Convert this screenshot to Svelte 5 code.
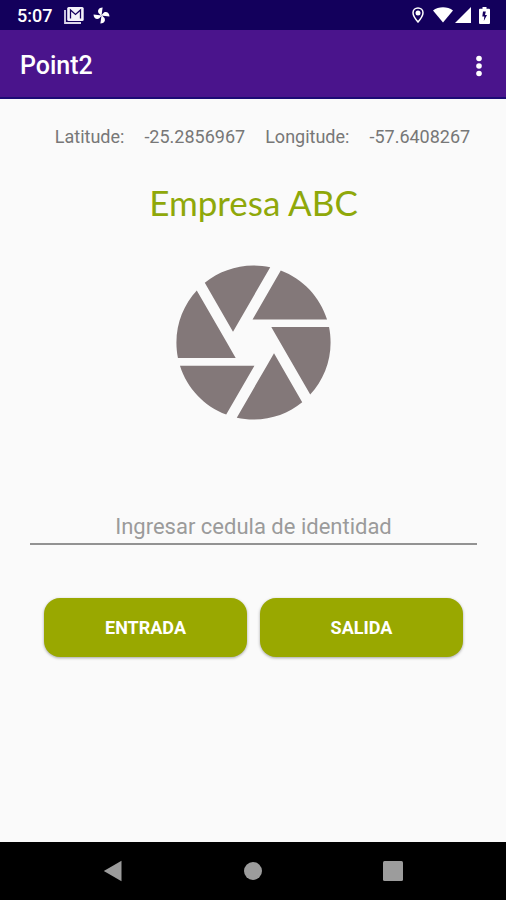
<svelte:head>
  <title>Point2</title>
</svelte:head>

<script>
  const coords = [
    { label: 'Latitude:', value: '-25.2856967' },
    { label: 'Longitude:', value: '-57.6408267' },
  ];

  const actions = ['ENTRADA', 'SALIDA'];

  let cedula = '';
</script>

<div class="screen">
  <div class="status">
    <span class="time">5:07</span>
    <div class="notifications">
      <svg width="20" height="17" viewBox="0 0 20 17" aria-hidden="true">
        <path d="M1 3v13h16" fill="none" stroke="#dcd8ea" stroke-width="1.8" />
        <rect x="3.2" y="0" width="16.5" height="14" rx="1.5" fill="#f4f2fa" />
        <path d="M6.500 11.500V3l5 4.500 5-4.500v8.500" fill="none" stroke="#16005e" stroke-width="1.3" />
      </svg>
      <svg width="17" height="17" viewBox="0 0 17 17" aria-hidden="true">
        <g fill="#fff" transform="rotate(8 8.5 8.5)">
          <path d="M8.500 9V0.500C5 .8 3.500 4 5.200 6.500z" />
          <path d="M8 8.500h8.500C16.200 5 13 3.500 10.500 5.200z" />
          <path d="M8.500 8v8.500c3.500-.3 5-3.500 3.300-6z" />
          <path d="M9 8.500H.5c.3 3.500 3.500 5 6 3.300z" />
        </g>
      </svg>
    </div>
    <div class="system">
      <svg width="12" height="16" viewBox="0 0 12 16" aria-hidden="true">
        <path d="M6 1C3.2 1 1 3.1 1 5.8 1 9.300 6 15 6 15s5-5.700 5-9.200C11 3.100 8.800 1 6 1z" fill="none" stroke="#fff" stroke-width="1.5" />
        <circle cx="6" cy="6" r="2.5" fill="#fff" />
      </svg>
      <svg class="wifi" width="20" height="16" viewBox="0 0 20 16" aria-hidden="true">
        <path d="M0 3.5C5.500-.9 14.500-.9 20 3.500L10 15.500z" fill="#fff" />
      </svg>
      <svg class="signal" width="16" height="16" viewBox="0 0 16 16" aria-hidden="true">
        <path d="M16 0v16H0z" fill="#fff" />
      </svg>
      <svg class="battery" width="11" height="17" viewBox="0 0 11 17" aria-hidden="true">
        <path d="M3.500 0h4v1.700H10a1 1 0 0 1 1 1V16a1 1 0 0 1-1 1H1a1 1 0 0 1-1-1V2.700a1 1 0 0 1 1-1h2.500z" fill="#fff" />
        <path d="M6.800 4.500H4L3.300 9.500h2L4.800 14l3.200-6H6z" fill="#16005e" />
      </svg>
    </div>
  </div>

  <header>
    <h1>Point2</h1>
    <button class="more" aria-label="More options">
      <svg width="6" height="22" viewBox="0 0 6 22" fill="#fff" aria-hidden="true">
        <circle cx="3" cy="3.5" r="2.8" />
        <circle cx="3" cy="11" r="2.8" />
        <circle cx="3" cy="18.5" r="2.8" />
      </svg>
    </button>
  </header>

  <main>
    <div class="coords">
      {#each coords as c}
        <span>{c.label}</span>
        <span>{c.value}</span>
      {/each}
    </div>

    <h2>Empresa ABC</h2>

    <svg class="shutter" viewBox="0 0 24 24" aria-hidden="true">
      <path d="M9.4 10.5l4.77-8.26C13.47 2.09 12.75 2 12 2c-2.4 0-4.6.85-6.32 2.25l3.66 6.35.06-.1zM21.54 9c-.92-2.92-3.15-5.26-6-6.34L11.88 9h9.66zm.26 1h-7.49l.29.5 4.76 8.25C21 16.97 22 14.61 22 12c0-.69-.07-1.35-.2-2zM8.54 12l-3.9-6.75C3.01 7.03 2 9.39 2 12c0 .69.07 1.35.2 2h7.49l-1.15-2zm-6.08 3c.92 2.92 3.15 5.26 6 6.34L12.12 15H2.46zm11.27 0l-3.9 6.76c.7.15 1.42.24 2.17.24 2.4 0 4.6-.85 6.32-2.25l-3.66-6.35-.93 1.6z" />
    </svg>

    <input
      type="text"
      inputmode="numeric"
      aria-label="Cedula de identidad"
      placeholder="Ingresar cedula de identidad"
      bind:value={cedula}
    />

    <div class="actions">
      {#each actions as action}
        <button>{action}</button>
      {/each}
    </div>
  </main>

  <nav>
    <button aria-label="Back">
      <svg width="20" height="22" viewBox="0 0 20 22" aria-hidden="true"><path d="M18.500.8v20.400L.8 11z" /></svg>
    </button>
    <button aria-label="Home">
      <svg width="20" height="20" viewBox="0 0 20 20" aria-hidden="true"><circle cx="10" cy="10" r="9" /></svg>
    </button>
    <button aria-label="Recents">
      <svg width="20" height="20" viewBox="0 0 20 20" aria-hidden="true"><rect width="20" height="20" rx="1.5" /></svg>
    </button>
  </nav>
</div>

<style>
  :global(body) {
    margin: 0;
  }

  .screen {
    display: flex;
    flex-direction: column;
    min-height: 100vh;
    background: #fafafa;
    font-family: Roboto, "Liberation Sans", sans-serif;
  }

  button {
    padding: 0;
    border: 0;
    background: none;
    font-family: inherit;
    cursor: pointer;
  }

  svg {
    display: block;
  }

  .status {
    display: flex;
    align-items: center;
    height: 30px;
    padding: 0 16px 0 17px;
    background: #13005c;
    color: #fff;
  }

  .time {
    font-size: 18px;
    font-weight: 500;
  }

  .notifications {
    display: flex;
    gap: 9px;
    margin-left: 12px;
  }

  .system {
    display: flex;
    align-items: center;
    margin-left: auto;
  }

  .wifi {
    margin-left: 9px;
  }

  .signal {
    margin-left: 2px;
  }

  .battery {
    margin-left: 8px;
  }

  header {
    display: flex;
    align-items: center;
    justify-content: space-between;
    box-sizing: border-box;
    height: 69px;
    padding: 4px 16px 0 20px;
    border-bottom: 2px solid #1c0b75;
    background: #4a148c;
  }

  h1 {
    margin: 0;
    color: #fff;
    font-size: 25px;
    font-weight: 500;
  }

  .more {
    padding: 8px;
  }

  main {
    display: flex;
    flex: 1;
    flex-direction: column;
    align-items: center;
    padding: 28px 29px 28px 30px;
  }

  .coords {
    display: flex;
    gap: 20px;
    padding-left: 18px;
    color: #777;
    font-size: 18px;
    line-height: 20px;
    white-space: nowrap;
  }

  h2 {
    margin: 31px 0 24px;
    color: #8fa80a;
    font-family: Lato, sans-serif;
    font-size: 35px;
    font-weight: 400;
    line-height: 48px;
  }

  .shutter {
    width: 185px;
    height: 185px;
    fill: #837879;
  }

  input {
    box-sizing: border-box;
    width: 100%;
    height: 36px;
    margin-top: 74px;
    padding: 0;
    border: 0;
    border-bottom: 2px solid #929292;
    background: none;
    color: #212121;
    font-family: inherit;
    font-size: 22px;
    text-align: center;
    outline: none;
  }

  input::placeholder {
    color: #9b9b9b;
  }

  .actions {
    display: flex;
    align-self: stretch;
    gap: 13px;
    margin: 53px 14px 0;
  }

  .actions button {
    flex: 1;
    height: 59px;
    border-radius: 16px;
    background: #99a800;
    box-shadow: 0 1px 3px rgba(0, 0, 0, 0.35);
    color: #fff;
    font-size: 18px;
    font-weight: 700;
  }

  nav {
    display: flex;
    align-items: center;
    justify-content: space-between;
    height: 58px;
    padding: 0 94px;
    background: #000;
  }

  nav button {
    display: flex;
    justify-content: center;
    width: 38px;
  }

  nav svg {
    fill: #9c9c9c;
  }
</style>
